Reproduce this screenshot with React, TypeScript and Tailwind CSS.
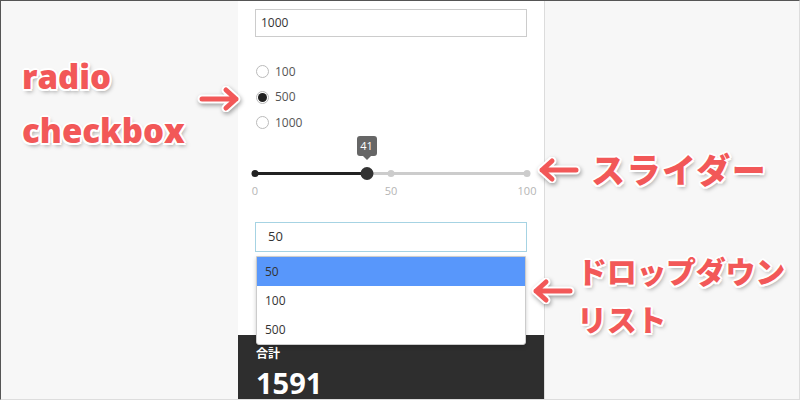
import React from "react";

const callout =
  "font-extrabold whitespace-nowrap text-[#f25858] font-['Open_Sans','Noto_Sans_CJK_JP',sans-serif] [text-shadow:2px_0_0_#fff,-2px_0_0_#fff,0_2px_0_#fff,0_-2px_0_#fff,1.5px_1.5px_0_#fff,-1.5px_1.5px_0_#fff,1.5px_-1.5px_0_#fff,-1.5px_-1.5px_0_#fff,2px_3px_4px_rgba(0,0,0,0.35)]";

// thick callout arrow with a white outline
const Arrow: React.FC<{ dir: "left" | "right"; className?: string }> = ({ dir, className }) => {
  const d = dir === "right" ? "M5 13H39M29 4L39 13L29 22" : "M39 13H5M15 4L5 13L15 22";
  return (
    <svg
      width="44"
      height="26"
      viewBox="0 0 44 26"
      className={`shrink-0 drop-shadow-[1px_2px_2px_rgba(0,0,0,0.35)] ${className ?? ""}`}
    >
      <path d={d} fill="none" stroke="#fff" strokeWidth="9" strokeLinecap="round" strokeLinejoin="round" />
      <path d={d} fill="none" stroke="#f25858" strokeWidth="5" strokeLinecap="round" strokeLinejoin="round" />
    </svg>
  );
};

const radios = ["100", "500", "1000"];
const options = ["50", "100", "500"];
const sliderValue = 41;

const Panel: React.FC = () => (
  <div className="w-[307px] h-full bg-white border-r border-[#dcdcdc] flex flex-col shrink-0">
    <div className="flex-1 px-[17px] pt-[8px] flex flex-col">
      <div className="h-[28px] border border-[#ccc] px-[5px] flex items-center text-[12px] text-[#333]">
        1000
      </div>

      {/* radio group */}
      <div className="mt-[22px] flex flex-col">
        {radios.map((r, i) => (
          <div key={r} className={`flex items-center gap-[6px] ${i === 1 ? "h-[26px]" : "h-[25px]"}`}>
            <span className="ml-[1px] w-[13px] h-[13px] rounded-full border border-[#bbb] bg-white flex items-center justify-center">
              {r === "500" && <span className="w-[9px] h-[9px] rounded-full bg-[#222]" />}
            </span>
            <span className="text-[12px] text-[#555]">{r}</span>
          </div>
        ))}
      </div>

      {/* slider */}
      <div className="relative h-[64px] mt-[1px]">
        <div className="absolute top-[36px] left-0 right-0 h-[3px] bg-[#ccc]" />
        <div className="absolute top-[36px] left-0 h-[3px] bg-[#222]" style={{ width: `${sliderValue}%` }} />
        <span className="absolute top-[34px] left-0 -translate-x-1/2 w-[7px] h-[7px] rounded-full bg-[#222]" />
        <span className="absolute top-[34px] left-1/2 -translate-x-1/2 w-[7px] h-[7px] rounded-full bg-[#ccc]" />
        <span className="absolute top-[34px] left-full -translate-x-1/2 w-[7px] h-[7px] rounded-full bg-[#ccc]" />
        <span
          className="absolute top-[31px] -translate-x-1/2 w-[13px] h-[13px] rounded-full bg-[#333]"
          style={{ left: `${sliderValue}%` }}
        />
        <div className="absolute top-0 -translate-x-1/2 flex flex-col items-center" style={{ left: `${sliderValue}%` }}>
          <div className="w-[20px] h-[20px] rounded-[3px] bg-[#666] text-white text-[11px] flex items-center justify-center">
            {sliderValue}
          </div>
          <div className="w-0 h-0 border-l-[4px] border-r-[4px] border-t-[4px] border-l-transparent border-r-transparent border-t-[#666]" />
        </div>
        <span className="absolute top-[47px] left-0 -translate-x-1/2 text-[11px] text-[#b5b5b5]">0</span>
        <span className="absolute top-[47px] left-1/2 -translate-x-1/2 text-[11px] text-[#b5b5b5]">50</span>
        <span className="absolute top-[47px] left-full -translate-x-1/2 text-[11px] text-[#b5b5b5]">100</span>
      </div>

      {/* select with open list */}
      <div className="relative mt-[22px] z-10">
        <div className="h-[30px] border border-[#a6d3e3] pl-[12px] flex items-center text-[13px] text-[#333]">
          50
        </div>
        <div className="absolute top-[34px] left-[1px] right-[1px] bg-white border border-[#ccc] rounded-b-[3px] shadow-[0_2px_4px_rgba(0,0,0,0.2)]">
          {options.map((o, i) => (
            <div
              key={o}
              className={`h-[29px] pl-[8px] flex items-center text-[12px] text-[#333] ${i === 0 ? "bg-[#5897fb]" : ""}`}
            >
              {o}
            </div>
          ))}
        </div>
      </div>
    </div>

    <div className="h-[64px] bg-[#2e2e2e] px-[18px] pt-[11px] text-white">
      <div className="text-[12px] font-bold leading-[16px] font-['Open_Sans','Noto_Sans_CJK_JP',sans-serif]">合計</div>
      <div className="text-[29px] font-bold leading-[28px] mt-[7px]">1591</div>
    </div>
  </div>
);

export default function App() {
  return (
    <div className="w-[800px] h-[400px] overflow-hidden border border-t-[#555] border-l-[#555] border-r-[#ddd] border-b-[#ddd] bg-[#f7f7f7] flex font-['Open_Sans','Noto_Sans_CJK_JP',sans-serif]">
      <div className="w-[237px] shrink-0 pt-[49px] pl-[21px] flex items-start">
        <div className="flex flex-col">
          <span className={`${callout} text-[33px] leading-[54px]`}>radio</span>
          <span className={`${callout} text-[33px] leading-[54px]`}>checkbox</span>
        </div>
        <Arrow dir="right" className="ml-auto mt-[36px] -mr-[3px] relative z-10" />
      </div>

      <Panel />

      <div className="flex-1 min-w-0 pt-[151px] flex flex-col">
        <div className="flex items-center h-[36px]">
          <Arrow dir="left" className="-ml-[8px] relative z-10" />
          <span className={`${callout} ml-[10px] text-[34px] leading-[36px] tracking-[1.5px]`}>スライダー</span>
        </div>
        <div className="mt-[60px] flex items-center">
          <Arrow dir="left" className="-ml-[14px] mb-[10px] relative z-10" />
          <div className="ml-[2px] flex flex-col">
            <span className={`${callout} text-[30px] leading-[48px] tracking-[-0.3px]`}>ドロップダウン</span>
            <span className={`${callout} text-[30px] leading-[48px] tracking-[-0.3px]`}>リスト</span>
          </div>
        </div>
      </div>
    </div>
  );
}
